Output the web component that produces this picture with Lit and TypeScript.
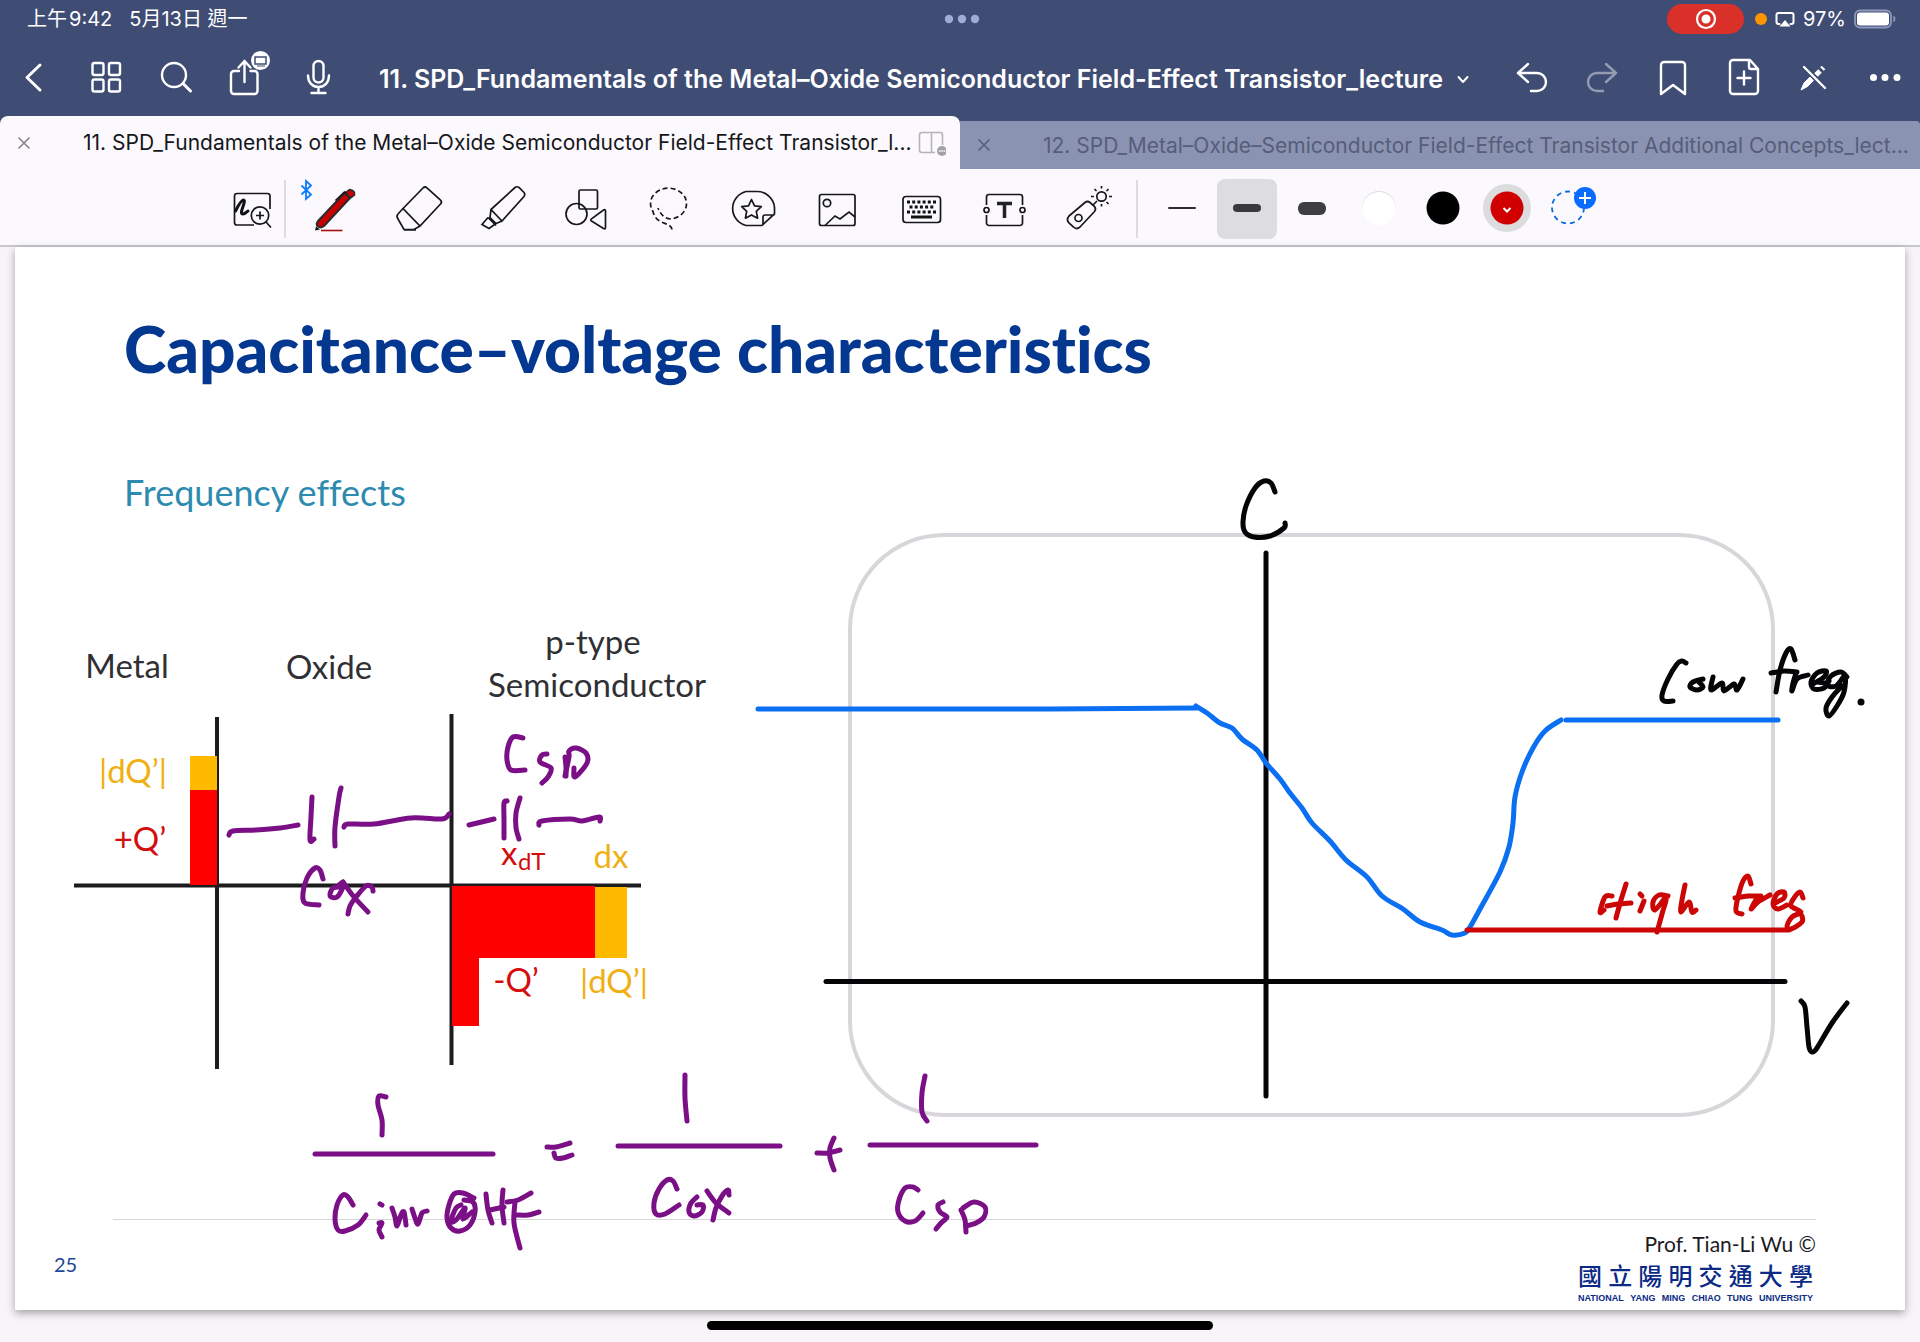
import { LitElement, html, svg, css, type SVGTemplateResult } from "lit";
import { customElement } from "lit/decorators.js";

type Pt = [number, number];

/** Smooth pen stroke through a flat list of x, y values. */
function stroke(...v: number[]): string {
  const p: Pt[] = [];
  for (let i = 0; i < v.length; i += 2) p.push([v[i], v[i + 1]]);
  if (p.length === 1) return `M${p[0][0]} ${p[0][1]}h1`;
  let d = `M${p[0][0]} ${p[0][1]}`;
  for (let i = 0; i < p.length - 1; i++) {
    const a = p[i - 1] ?? p[i];
    const b = p[i];
    const c = p[i + 1];
    const e = p[i + 2] ?? c;
    const x1 = b[0] + (c[0] - a[0]) / 6;
    const y1 = b[1] + (c[1] - a[1]) / 6;
    const x2 = c[0] - (e[0] - b[0]) / 6;
    const y2 = c[1] - (e[1] - b[1]) / 6;
    d += `C${x1.toFixed(1)} ${y1.toFixed(1)} ${x2.toFixed(1)} ${y2.toFixed(1)} ${c[0]} ${c[1]}`;
  }
  return d;
}

const PURPLE_INK: number[][] = [
  // C SD beside the semiconductor
  [523, 738, 513, 737, 508, 747, 507, 760, 511, 770, 525, 770],
  [547, 754, 542, 755, 540, 762, 551, 768, 548, 777, 542, 783],
  [565, 757, 566, 767, 566, 776],
  [565, 776, 569, 757, 569, 751, 576, 748, 586, 753, 587, 763, 575, 777, 574, 768],
  // oxide capacitor
  [229, 835, 233, 831, 256, 830, 280, 828, 298, 825],
  [312, 797, 311, 817, 310, 840, 314, 839],
  [341, 788, 339, 797, 335, 827, 335, 846],
  [344, 827, 348, 824, 374, 824, 411, 818, 442, 819, 449, 814],
  // depletion capacitor
  [469, 825, 494, 819],
  [507, 801, 504, 803, 504, 820, 504, 838],
  [520, 798, 516, 813, 516, 828, 519, 839],
  [539, 825, 542, 821, 570, 819, 582, 821, 599, 817, 600, 821],
  // C ox
  [323, 879, 320, 870, 315, 868, 307, 878, 303, 893, 305, 903, 319, 905],
  [341, 887, 333, 888, 330, 896, 337, 897, 343, 887, 343, 882, 339, 885],
  [343, 882, 354, 897, 368, 912],
  [373, 891, 372, 887, 366, 886, 356, 897, 350, 906, 348, 914],
  // 1 / Cinv@HF
  [386, 1097, 379, 1096, 378, 1105, 382, 1120, 382, 1135],
  [353, 1205, 348, 1197, 343, 1195, 337, 1205, 335, 1219, 338, 1230, 345, 1231, 358, 1225, 366, 1215],
  [380, 1204, 382, 1205],
  [379, 1223, 382, 1223, 379, 1230, 382, 1237],
  [392, 1208, 395, 1217, 397, 1226, 401, 1215, 404, 1212, 406, 1225],
  [412, 1209, 415, 1218, 418, 1224, 422, 1213, 427, 1211],
  [474, 1198, 463, 1193, 454, 1194, 449, 1205, 447, 1218, 451, 1228, 460, 1231, 470, 1225, 475, 1212, 473, 1202, 464, 1200],
  [461, 1205, 456, 1208, 451, 1221, 456, 1220, 465, 1208, 463, 1219, 472, 1212],
  [486, 1194, 488, 1210, 492, 1223],
  [503, 1190, 502, 1206, 504, 1223],
  [490, 1210, 504, 1207],
  [507, 1202, 518, 1200, 531, 1193],
  [515, 1202, 514, 1223, 520, 1248],
  [516, 1215, 528, 1215, 539, 1212],
  // equals
  [547, 1147, 556, 1147, 570, 1143],
  [554, 1153, 556, 1158, 563, 1158, 572, 1155],
  // 1 / Cox
  [685, 1075, 685, 1098, 687, 1121],
  [677, 1189, 673, 1181, 667, 1180, 659, 1189, 654, 1203, 656, 1214, 665, 1214, 679, 1205],
  [697, 1197, 691, 1203, 689, 1212, 694, 1216, 702, 1212, 703, 1205, 697, 1205],
  [707, 1191, 716, 1203, 729, 1213],
  [729, 1195, 728, 1190, 722, 1196, 716, 1208, 713, 1220],
  // plus
  [834, 1138, 830, 1148, 830, 1158, 834, 1170],
  [817, 1153, 828, 1153, 840, 1150],
  // 1 / Csd
  [925, 1076, 922, 1093, 922, 1112, 927, 1121],
  [918, 1190, 913, 1187, 905, 1188, 899, 1200, 898, 1212, 905, 1221, 915, 1221, 923, 1213],
  [943, 1202, 938, 1205, 940, 1212, 947, 1217, 941, 1223, 936, 1229],
  [961, 1210, 965, 1220, 966, 1232],
  [963, 1208, 974, 1202, 985, 1207, 984, 1217, 976, 1223, 966, 1226],
];

const BLACK_INK: number[][] = [
  [1275, 492, 1271, 483, 1264, 481, 1255, 488, 1246, 506, 1243, 522, 1245, 532, 1254, 537, 1270, 536, 1284, 528, 1285, 523],
  // Low
  [1686, 663, 1682, 661, 1677, 664, 1668, 679, 1662, 695, 1664, 701, 1673, 701],
  [1703, 679, 1693, 682, 1690, 687, 1697, 690, 1703, 687, 1699, 682],
  [1713, 677, 1711, 690, 1722, 683, 1724, 691, 1734, 684, 1737, 690, 1743, 679],
  // freq.
  [1795, 660, 1791, 649, 1786, 653, 1780, 670, 1776, 692],
  [1771, 673, 1784, 671, 1797, 672],
  [1796, 673, 1793, 683, 1792, 691, 1797, 679, 1808, 675],
  [1813, 684, 1824, 677, 1826, 671, 1817, 673, 1811, 682, 1814, 689, 1824, 688, 1829, 681],
  [1818, 682, 1824, 683],
  [1847, 677, 1841, 672, 1831, 676, 1827, 685, 1836, 686, 1845, 676, 1844, 692, 1837, 706, 1829, 716, 1826, 708, 1832, 697, 1842, 686],
  // V
  [1801, 1001, 1805, 1007, 1807, 1027, 1809, 1047, 1812, 1052, 1817, 1048, 1832, 1023, 1847, 1003],
];

const RED_INK: number[][] = [
  [1612, 896, 1605, 897, 1600, 912, 1604, 910],
  [1607, 906, 1618, 904, 1631, 903],
  [1626, 884, 1621, 900, 1616, 918],
  [1640, 894, 1642, 896],
  [1644, 901, 1640, 911],
  [1668, 896, 1659, 895, 1653, 902, 1655, 910, 1666, 898, 1662, 914, 1657, 932],
  [1685, 885, 1682, 900, 1681, 912, 1689, 902, 1692, 912, 1696, 910],
  [1751, 884, 1748, 876, 1743, 881, 1738, 897, 1736, 911, 1742, 914],
  [1735, 898, 1748, 896, 1761, 896],
  [1757, 898, 1751, 909, 1758, 902, 1770, 895],
  [1775, 903, 1784, 898, 1784, 892, 1777, 894, 1773, 904, 1778, 909, 1787, 905],
  [1803, 898, 1800, 892, 1794, 898, 1791, 906, 1801, 912, 1792, 917, 1787, 926, 1791, 929, 1802, 922, 1802, 916],
];

const CV_CURVE = stroke(
  1196, 706, 1207, 713, 1220, 723, 1232, 728, 1242, 739, 1257, 750, 1266, 763, 1280, 779, 1290, 793,
  1302, 808, 1312, 823, 1330, 841, 1346, 860, 1367, 877, 1382, 896, 1403, 909, 1420, 922, 1442, 930,
  1452, 935, 1465, 933, 1470, 927, 1480, 909, 1500, 872, 1509, 847, 1513, 823, 1515, 797, 1522, 772,
  1533, 748, 1545, 731, 1561, 720,
);

/** Icon whose drawing is centred on cx, cy of its own coordinate system. */
function icon(cx: number, cy: number, w: number, h: number, body: SVGTemplateResult) {
  return html`<svg class="icon" width=${w} height=${h} viewBox="${cx - w / 2} ${cy - h / 2} ${w} ${h}" aria-hidden="true">${body}</svg>`;
}

const LEFT_NAV = [
  { label: "Back", art: icon(35, 77, 60, 60, svg`<path class="w3" d="M40 65L27 77.500L40 90"/>`) },
  {
    label: "Thumbnails",
    art: icon(106, 77, 60, 60, svg`<g class="w2"><rect x="92.500" y="63" width="11" height="12" rx="2"/><rect x="109" y="63" width="11" height="12" rx="2"/><rect x="92.500" y="79.500" width="11" height="12" rx="2"/><rect x="109" y="79.500" width="11" height="12" rx="2"/></g>`),
  },
  { label: "Search", art: icon(177, 77, 60, 60, svg`<circle class="w2" cx="174" cy="75" r="12"/><path class="w3" d="M183 83.500L190.500 91"/>`) },
  {
    label: "Share",
    art: icon(248, 77, 60, 60, svg`<g class="w2"><path d="M239 71h-5a3 3 0 0 0-3 3v17a3 3 0 0 0 3 3h20.500a3 3 0 0 0 3-3v-17a3 3 0 0 0-3-3h-4"/><path d="M244.500 82V61M238.500 67.500l6-6.500 6 6.500"/></g><circle cx="260.500" cy="60.500" r="9.500" fill="#fff"/><rect x="255" y="57" width="11" height="7" fill="none" stroke="#3f4c74" stroke-width="1.500"/><path d="M257 66h8" stroke="#3f4c74"/>`),
  },
  {
    label: "Record",
    art: icon(319, 77, 60, 60, svg`<g class="w2"><rect x="313.500" y="61" width="10" height="21.500" rx="5"/><path d="M308 75.500c0 7 4.500 11.500 10.500 11.500s10.500-4.500 10.500-11.500M318.500 87v6M311.500 93h14"/></g>`),
  },
];

const RIGHT_NAV = [
  { label: "Undo", art: icon(1530, 77, 60, 60, svg`<path class="w2" d="M1528 64L1518 73L1528 82M1518 73H1537a9 9 0 0 1 0 18H1531"/>`) },
  { label: "Redo", art: icon(1601, 77, 60, 60, svg`<path class="w2" opacity=".45" d="M1606 64L1616 73L1606 82M1616 73H1597a9 9 0 0 0 0 18H1603"/>`) },
  { label: "Bookmark", art: icon(1672, 77, 60, 60, svg`<path class="w2" d="M1661 94V65a3 3 0 0 1 3-3h18a3 3 0 0 1 3 3V94L1673 85Z"/>`) },
  { label: "Add page", art: icon(1743, 77, 60, 60, svg`<path class="w2" d="M1750 60H1733a3 3 0 0 0-3 3V91a3 3 0 0 0 3 3H1755a3 3 0 0 0 3-3V69ZM1749 60V67a2 2 0 0 0 2 2H1758M1744 71.500V84.500M1737.500 78H1750.500"/>`) },
  {
    label: "Read-only mode",
    art: icon(1814, 77, 60, 60, svg`<path d="M1801 90l3-7 6-6 3.500 3.500-6 6Z" fill="#fff" stroke="#fff" stroke-width="1"/><path d="M1816 75l4-4M1822 69l1.500-1.500" stroke="#fff" stroke-width="5" fill="none"/><path d="M1804 67L1825 88" stroke="#3f4c74" stroke-width="5"/><path class="w2" d="M1804 67L1825 88"/>`),
  },
  { label: "More", art: icon(1885, 77, 60, 60, svg`<g fill="#fff"><circle cx="1873.500" cy="77.500" r="3.500"/><circle cx="1885" cy="77.500" r="3.500"/><circle cx="1897" cy="77.500" r="3.500"/></g>`) },
];

const TOOLS = [
  {
    label: "Pen",
    art: icon(333, 209, 80, 60, svg`<path d="M301.500 185.500l9.500 9-5 4.500V181l5 4.500-9.500 9" fill="none" stroke="#0a7aff" stroke-width="1.800"/><path d="M318 221L344.500 193l5.500 5L324 226q-3.500 2.500-6 .5t0-5.500Z" fill="#c80000" stroke="#2b2b2b" stroke-width="2" stroke-linejoin="round"/><path d="M345.500 192.500l4-3q6 1 5 5.500l-4 3Z" fill="#c80000" stroke="#2b2b2b" stroke-width="1.500"/><path d="M335.500 200.500l9-8.500 2 1" class="t"/><path d="M315 230.500l1-4 4 3Z" fill="#111"/><path d="M321 230.500h21.500" stroke="#a81010" stroke-width="1.600"/>`),
  },
  { label: "Eraser", art: icon(417, 209, 80, 60, svg`<path class="t" d="M403 208.500L423 188q2-2 4 0l13.500 12q2 2 0 4L420 226ZM403 208.500l-5 5.500q-2 2 0 5l6 10.500H414l6-3.500M404 230h12"/>`) },
  { label: "Highlighter", art: icon(501, 209, 80, 60, svg`<path class="t" d="M491 209.500L515 187.500q2-1.500 4 0l5 5q1.500 2 0 4L502 221ZM491 209.500l-1 8 6 6 6-2.500M488 217.500l8 8M488 217.500l-6 7 7 4 7-5"/>`) },
  { label: "Shapes", art: icon(585, 209, 80, 60, svg`<g class="t"><rect x="579" y="190" width="18.500" height="19" rx="1.500"/><circle cx="576.500" cy="214" r="10.500"/><path d="M605.500 211v16.500q0 2-2 1L591.500 221q-1.500-1 0-2.200L603.500 210q2-1 2 1Z"/></g>`) },
  { label: "Lasso", art: icon(669, 209, 80, 60, svg`<path class="t" stroke-dasharray="5 3" d="M672 229.500c-1-8-16-4-19-18a18 15.500 0 1 1 18 7.500c-6 0-10-4-13-11"/>`) },
  { label: "Stickers", art: icon(755, 209, 80, 60, svg`<path class="t" d="M764 225.500H748a17.500 17.500 0 0 1 0-34H759a17.500 17.500 0 0 1 17.500 16V214ZM765 225v-8q0-2 2-2h9.500"/><path class="t" stroke-linejoin="round" d="M753.500 199.500l3 6.300 6.800.8-5 4.800 1.300 6.800-6.100-3.300-6.100 3.300 1.300-6.800-5-4.800 6.800-.8Z"/>`) },
  { label: "Image", art: icon(837, 209, 80, 60, svg`<g class="t"><rect x="819.500" y="194.500" width="35.500" height="31" rx="2"/><circle cx="827" cy="203" r="3.700"/><path d="M825 225.500L835 216l5 3 9-7 6 5"/></g>`) },
  { label: "Keyboard", art: icon(921, 209, 80, 60, svg`<rect class="t" x="903" y="196.500" width="37.500" height="26" rx="3"/><path d="M907 202h30M907 212h30" stroke="#111" stroke-width="3" stroke-dasharray="3 2.200"/><path d="M909.500 207h25" stroke="#111" stroke-width="3" stroke-dasharray="3 2.200"/><path d="M911 217h21" stroke="#111" stroke-width="3"/>`) },
  { label: "Text", art: icon(1005, 209, 80, 60, svg`<g class="t"><path d="M986.500 205V197a2.500 2.500 0 0 1 2.500-2.500h31a2.500 2.500 0 0 1 2.500 2.500V205M986.500 215v8a2.500 2.500 0 0 0 2.500 2.500h31a2.500 2.500 0 0 0 2.500-2.500V215"/><circle cx="986.500" cy="210" r="2.500"/><circle cx="1022.500" cy="210" r="2.500"/></g><path d="M997 203.500h15M1004.500 203v15" stroke="#222" stroke-width="3.500"/>`) },
  { label: "Laser pointer", art: icon(1089, 209, 80, 60, svg`<g class="t"><path d="M1069 216l16-13.500q2.500-2 5 0l4.500 4q2 2.500 0 5L1080 227q-3.500 3-6.500 0l-4.500-4q-3-3.500 0-7Z"/><circle cx="1078.500" cy="218" r="3.500"/><circle cx="1101.500" cy="196.500" r="4.700"/><path d="M1101.500 186v2.500M1101.500 204v2.500M1091 196.500h3M1109 196.500h3M1094.500 189l2 2M1108.500 204l-2-2M1108.500 189l-2 2M1097 201l-4 4"/></g>`) },
];

const STROKES = [
  { label: "Thin stroke", on: false, art: svg`<path d="M-13 -1H13" stroke="#2c2c2e" stroke-width="2" stroke-linecap="round"/>` },
  { label: "Medium stroke", on: true, art: svg`<rect x="-14" y="-5" width="28" height="8" rx="4" fill="#3a3a3c"/>` },
  { label: "Thick stroke", on: false, art: svg`<rect x="-14" y="-7" width="28" height="13" rx="6" fill="#3f3f41"/>` },
  { label: "White", on: false, art: svg`<circle cx="2" cy="-1.500" r="16.500" fill="#dedde0"/><circle cx="2" cy="-.500" r="16.500" fill="#fff"/>` },
  { label: "Black", on: false, art: svg`<circle cx="1" cy="-1" r="16.500" fill="#000"/>` },
  { label: "Red", on: false, art: svg`<circle cy="-1" r="24" fill="#dcdbde"/><circle cy="-1" r="16.500" fill="#d00000"/><path d="M-3.500 -1L0 2.500L3.500 -1" fill="none" stroke="#fff" stroke-width="2"/>` },
  { label: "Add colour", on: false, art: svg`<circle cx="-4" cy="-1.500" r="16" fill="none" stroke="#0a6cdc" stroke-width="1.800" stroke-dasharray="5 4"/><circle cx="13" cy="-11" r="11" fill="#0a6cff"/><path d="M7 -11H19M13 -17V-5" stroke="#fff" stroke-width="2"/>` },
];

@customElement("app-root")
export class AppRoot extends LitElement {
  static styles = css`
    :host {
      display: block;
      min-height: 100vh;
      background: #f7f5f9;
      font-family: Inter, "Noto Sans CJK TC", sans-serif;
      color: #111;
    }
    * { box-sizing: border-box; }
    button {
      margin: 0;
      padding: 0;
      border: 0;
      background: none;
      font: inherit;
      color: inherit;
      display: flex;
      align-items: center;
      justify-content: center;
      flex: none;
    }
    .icon { display: block; flex: none; }
    .w2, .w3 { fill: none; stroke: #fff; stroke-linecap: round; stroke-linejoin: round; }
    .w2 { stroke-width: 2.4; }
    .w3 { stroke-width: 3; }
    .t { fill: none; stroke: #16161c; stroke-width: 1.7; }

    .top { background: #3f4c74; color: #fff; }
    .status {
      height: 38px;
      padding: 0 24px 0 27px;
      display: grid;
      grid-template-columns: 1fr auto 1fr;
      align-items: center;
      font-size: 20px;
      line-height: 24px;
    }
    .clock { display: flex; gap: 2px; }
    .date { padding-left: 15px; }
    .right { display: flex; align-items: center; justify-content: flex-end; gap: 8px; }
    .rec {
      width: 77px;
      height: 30px;
      margin-right: 3px;
      border-radius: 15px;
      background: #d9302a;
      display: grid;
      place-items: center;
    }
    .nav { height: 78px; display: flex; align-items: center; }
    .group { display: flex; gap: 1px; }
    .group button { width: 70px; height: 60px; }
    .title {
      flex: 1;
      min-width: 0;
      padding-top: 3px;
      display: flex;
      align-items: center;
      justify-content: center;
      gap: 13px;
    }
    .title h1 { margin: 0; font-size: 25px; line-height: 32px; font-weight: 600; white-space: nowrap; }
    .tabs { height: 53px; display: flex; align-items: flex-end; }
    .tab { flex: 1; min-width: 0; height: 48px; display: flex; align-items: center; background: #8a93b1; color: #565e79; border-radius: 0 4px 0 0; }
    .tab.active { height: 53px; background: #fbf9fd; color: #16161a; border-radius: 8px 8px 0 0; }
    .tab .close { width: 48px; height: 48px; }
    .tab.active .close { color: #85848a; }
    .tab .name {
      flex: 1;
      min-width: 0;
      height: 48px;
      padding-left: 35px;
      font-size: 21px;
      justify-content: flex-start;
    }
    .name span { white-space: nowrap; }
    .tab .split { width: 44px; height: 48px; justify-content: flex-start; }

    .tools {
      height: 78px;
      padding: 4px 0 0 220px;
      display: flex;
      align-items: center;
      background: #fbf9fd;
      border-bottom: 2px solid #c9c8cd;
    }
    .tools .lens { width: 64px; height: 60px; }
    .tools .tool { width: 84px; height: 60px; }
    .sep { width: 2px; height: 58px; background: #dcdbdf; flex: none; }
    .set { display: flex; padding: 0 5px; }
    .pens { display: flex; gap: 5px; padding-left: 14px; }
    .pens button { width: 60px; height: 60px; border-radius: 8px; }
    .pens .on { background: #dddce0; }

    .desk { padding: 0 15px; }
    .slide {
      position: relative;
      aspect-ratio: 1890 / 1063;
      background: #fff;
      box-shadow: 0 3px 8px rgba(0, 0, 0, 0.35);
      display: flex;
      flex-direction: column;
      font-family: Lato, "Noto Sans CJK TC", sans-serif;
      font-variant-ligatures: none;
    }
    .ink { position: absolute; inset: 0; width: 100%; height: 100%; }
    .ink path, .ink line { fill: none; stroke-linecap: round; stroke-linejoin: round; }
    .ink text { font-size: 33px; fill: #303034; }
    .ink .mid { text-anchor: middle; }
    .ink .gold { fill: #f0b014; }
    .ink .crimson { fill: #d40d0d; }
    .ink .sub { font-size: 24px; }
    .heading { margin: 66px 109px 0; font-size: 64px; line-height: 72px; font-weight: 900; color: #04378f; }
    .topic { margin: 83px 109px 0; font-size: 36px; line-height: 48px; font-weight: 400; color: #2e8bb0; }
    .foot { margin: auto 89px 6px 98px; border-top: 1px solid #d6d5da; display: flex; justify-content: space-between; }
    .num { margin: 32px 0 0 -59px; font-size: 20px; line-height: 24px; color: #1c4896; }
    .credit { width: 240px; padding-top: 12px; text-align: right; }
    .prof { font-size: 21px; line-height: 24px; color: #1b1b1f; }
    .uni, .eng { display: flex; justify-content: space-between; padding: 0 3px 0 2px; color: #0a2a86; }
    .uni { margin-top: 4px; font-size: 24px; line-height: 32px; font-weight: 500; }
    .eng { font: 700 9px/12px "Liberation Sans", sans-serif; }
    .home { width: 506px; height: 9px; margin: 11px auto 12px; border-radius: 5px; background: #000; }
  `;

  private ink(list: number[][], color: string) {
    return svg`<g stroke=${color} stroke-width="5">${list.map((s) => svg`<path d=${stroke(...s)}></path>`)}</g>`;
  }

  private cross() {
    return icon(0, 0, 20, 20, svg`<path d="M-5.500 -5.500L5.500 5.500M5.500 -5.500L-5.500 5.500" stroke="currentColor" stroke-width="1.600" fill="none"/>`);
  }

  render() {
    return html`
      <header class="top">
        <div class="status">
          <div class="clock"><span>上午</span><span>9:42</span><span class="date">5月13日 週一</span></div>
          ${icon(960, 19, 40, 12, svg`<g fill="#a0acd8"><circle cx="947" cy="19" r="4.200"/><circle cx="960" cy="19" r="4.200"/><circle cx="973" cy="19" r="4.200"/></g>`)}
          <div class="right">
            <span class="rec">${icon(0, 0, 24, 24, svg`<circle r="9" fill="none" stroke="#fff" stroke-width="2.200"/><circle r="4.500" fill="#fff"/>`)}</span>
            ${icon(0, 0, 12, 12, svg`<circle r="6" fill="#ff9500"/>`)}
            ${icon(1786.5, 19, 20, 18, svg`<path class="w2" style="stroke-width:2" d="M1781 24H1780a2 2 0 0 1-2-2V15a2 2 0 0 1 2-2H1793a2 2 0 0 1 2 2V22a2 2 0 0 1-2 2H1792"/><path d="M1781 26.500L1786.500 20L1792 26.500Z" fill="#fff"/>`)}
            <span>97%</span>
            ${icon(1875, 19.5, 42, 20, svg`<rect x="1855" y="11" width="36" height="17" rx="5" fill="none" stroke="#8f99bb" stroke-width="1.800"/><rect x="1857" y="13" width="32" height="13" rx="3" fill="#fff"/><path d="M1893.500 17q2 2.500 0 5" fill="none" stroke="#8f99bb" stroke-width="1.800"/>`)}
          </div>
        </div>
        <nav class="nav">
          <div class="group">${LEFT_NAV.map((n) => html`<button aria-label=${n.label}>${n.art}</button>`)}</div>
          <button class="title">
            <h1>11. SPD_Fundamentals of the Metal–Oxide Semiconductor Field-Effect Transistor_lecture</h1>
            ${icon(0, 0, 14, 14, svg`<path class="w2" style="stroke-width:2" d="M-4.500 -2L0 3L4.500 -2"/>`)}
          </button>
          <div class="group">${RIGHT_NAV.map((n) => html`<button aria-label=${n.label}>${n.art}</button>`)}</div>
        </nav>
        <div class="tabs">
          <div class="tab active">
            <button class="close" aria-label="Close tab">${this.cross()}</button>
            <button class="name"><span>11. SPD_Fundamentals of the Metal–Oxide Semiconductor Field-Effect Transistor_l...</span></button>
            <button class="split" aria-label="Split view">${icon(932, 142, 30, 28, svg`<path d="M943.500 144V134a2.500 2.500 0 0 0-2.500-2.500H923a2.500 2.500 0 0 0-2.500 2.500V149a2.500 2.500 0 0 0 2.500 2.500H936M932.500 131.500V151.500" fill="none" stroke="#b5b4b9" stroke-width="1.600"/><circle cx="943" cy="150" r="5" fill="#a3a2a8"/><path d="M940 150h6" stroke="#fff" stroke-width="1.500" stroke-dasharray="1.500 .8"/>`)}</button>
          </div>
          <div class="tab">
            <button class="close" aria-label="Close tab">${this.cross()}</button>
            <button class="name"><span>12. SPD_Metal–Oxide–Semiconductor Field-Effect Transistor Additional Concepts_lect...</span></button>
          </div>
        </div>
      </header>

      <div class="tools">
        <button class="lens" aria-label="Zoom window">
          ${icon(252, 209, 48, 48, svg`<path class="t" d="M270 209V196a2.500 2.500 0 0 0-2.500-2.500H237a2.500 2.500 0 0 0-2.500 2.500V222.500a2.500 2.500 0 0 0 2.500 2.500H254"/><path d="M235.500 211c3-6 6-11 8-11s0 5-1 8-2 6 .5 6 3-2 5-3" fill="none" stroke="#111" stroke-width="3" stroke-linecap="round"/><circle class="t" cx="260" cy="215.500" r="8.700"/><path class="t" d="M256 215.500h8M260 211.500v8M266 222l5 5.500"/>`)}
        </button>
        <span class="sep"></span>
        <div class="set">${TOOLS.map((t) => html`<button class="tool" aria-label=${t.label}>${t.art}</button>`)}</div>
        <span class="sep"></span>
        <div class="pens">
          ${STROKES.map((s) => html`<button class=${s.on ? "on" : ""} aria-label=${s.label}>${icon(0, 0, 60, 52, s.art)}</button>`)}
        </div>
      </div>

      <main class="desk">
        <article class="slide">
          <h2 class="heading">Capacitance–voltage characteristics</h2>
          <h3 class="topic">Frequency effects</h3>
          <footer class="foot">
            <div class="num">25</div>
            <div class="credit">
              <div class="prof">Prof. Tian-Li Wu ©</div>
              <div class="uni">${[..."國立陽明交通大學"].map((c) => html`<span>${c}</span>`)}</div>
              <div class="eng">${"NATIONAL YANG MING CHIAO TUNG UNIVERSITY".split(" ").map((w) => html`<span>${w}</span>`)}</div>
            </div>
          </footer>
          <svg class="ink" viewBox="15 247 1890 1063">
            <rect x="850" y="535" width="923" height="580" rx="94" fill="none" stroke="#d8d6da" stroke-width="4"></rect>
            <g stroke="#1c1c1e" stroke-width="4">
              <path style="stroke-linecap:butt" d="M217 717V1069M451.500 714V1065M74 885.500H641"></path>
            </g>
            <rect x="190" y="756" width="27" height="34" fill="#ffba00"></rect>
            <rect x="190" y="790" width="27" height="95" fill="#fe0000"></rect>
            <path style="fill:#fe0000" d="M452 886H595V958H479V1026H452Z"></path>
            <rect x="595" y="887" width="32" height="71" fill="#ffba00"></rect>

            <text class="mid" x="127" y="678">Metal</text>
            <text class="mid" x="329" y="679">Oxide</text>
            <text class="mid" x="593" y="654">p-type</text>
            <text class="mid" x="597" y="697">Semiconductor</text>
            <text class="mid gold" x="133" y="783">|dQ’|</text>
            <text class="mid crimson" x="140" y="851">+Q’</text>
            <text class="crimson" x="501" y="865">x</text>
            <text class="crimson sub" x="518" y="870">dT</text>
            <text class="mid gold" x="611" y="868">dx</text>
            <text class="mid crimson" x="516" y="992">-Q’</text>
            <text class="mid gold" x="614" y="993">|dQ’|</text>

            <g stroke="#050508" stroke-width="5">
              <line x1="1266" y1="553" x2="1266" y2="1096"></line>
              <line x1="826" y1="981.500" x2="1785" y2="981.500"></line>
            </g>
            <g stroke="#0b6ff2" stroke-width="5">
              <path d="M758 709H1050L1197 708"></path>
              <path d=${CV_CURVE}></path>
              <line x1="1566" y1="720" x2="1778" y2="720"></line>
            </g>
            <line x1="1467" y1="930" x2="1789" y2="930" stroke="#cc0505" stroke-width="5"></line>
            <g stroke="#7a0f86" stroke-width="5">
              <line x1="315" y1="1154" x2="493" y2="1154"></line>
              <line x1="618" y1="1146" x2="780" y2="1146"></line>
              <line x1="870" y1="1145" x2="1036" y2="1145"></line>
            </g>
            ${this.ink(PURPLE_INK, "#7a0f86")}
            ${this.ink(BLACK_INK, "#050508")}
            ${this.ink(RED_INK, "#cc0505")}
            <circle cx="1861" cy="702" r="3.500" fill="#050508"></circle>
          </svg>
        </article>
        <div class="home"></div>
      </main>
    `;
  }
}
